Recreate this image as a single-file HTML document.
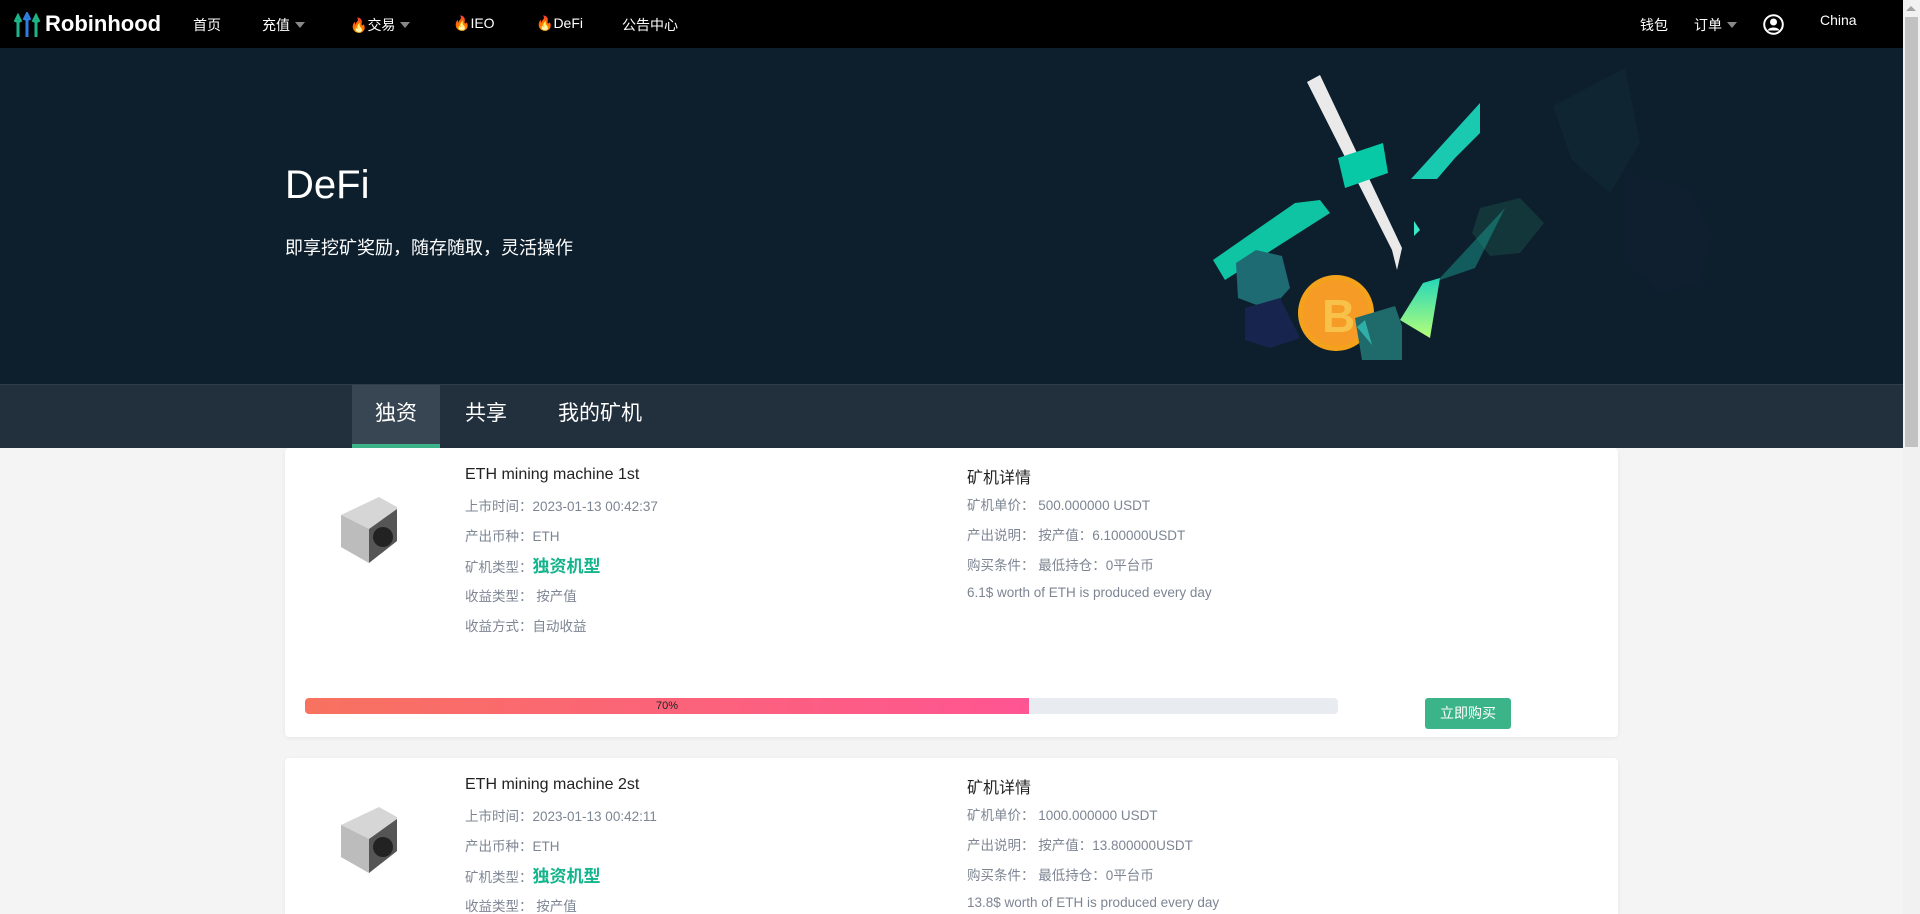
<!DOCTYPE html>
<html style="height:914px;overflow:hidden"><head><meta charset="utf-8"><style>
*{margin:0;padding:0;box-sizing:border-box}
body{width:1920px;height:914px;overflow:hidden;background:#f4f4f4;font-family:"Liberation Sans","Noto Sans CJK SC",sans-serif;position:relative}
.nav{position:absolute;left:0;top:0;width:1903px;height:48px;background:#000;color:#fff;font-size:14px}
.nav span{position:absolute;top:15px;white-space:nowrap}
.caret{display:inline-block;width:0;height:0;border-left:5px solid transparent;border-right:5px solid transparent;border-top:6px solid #888;margin-left:5px;vertical-align:2px}
.banner{position:absolute;left:0;top:48px;width:1903px;height:336px;background:#0d1f2d;overflow:hidden}
.tabs{position:absolute;left:0;top:384px;width:1903px;height:64px;background:#222f3c;border-top:1px solid #2e3d49}
.tab{position:absolute;top:0;height:63px;color:#fff;font-size:21px;line-height:58px;text-align:center}
.card{position:absolute;left:285px;width:1333px;background:#fff;border-radius:4px;box-shadow:0 1px 4px rgba(0,0,0,.06)}
.t{position:absolute;font-size:16px;color:#222;white-space:nowrap}
.r{position:absolute;font-size:13.5px;color:#7d8593;white-space:nowrap}
.g{color:#14b48c;font-size:17px;font-weight:bold}
.sb{position:absolute;left:1903px;top:0;width:17px;height:914px;background:#f1f1f1}
</style></head><body>
<div class="nav">
<svg style="position:absolute;left:14px;top:12px" width="28" height="26" viewBox="0 0 28 26"><g stroke-width="3" fill="none"><path d="M4 25V8M1 10L4 4L7 10" stroke="#1db488"/><path d="M13 25V6M10 8L13 2L16 8" stroke="#2f7de0"/><path d="M22 25V8M19 10L22 4L25 10" stroke="#1db488"/></g></svg>
<span style="left:45px;top:11px;font-size:22px;font-weight:bold">Robinhood</span>
<span style="left:193px">首页</span>
<span style="left:262px">充值<i class="caret"></i></span>
<span style="left:350px"><span style="position:static;color:#f3701c">🔥</span>交易<i class="caret"></i></span>
<span style="left:453px"><span style="position:static;color:#f3701c">🔥</span>IEO</span>
<span style="left:536px"><span style="position:static;color:#f3701c">🔥</span>DeFi</span>
<span style="left:622px">公告中心</span>
<span style="left:1640px">钱包</span>
<span style="left:1694px">订单<i class="caret"></i></span>
<svg style="position:absolute;left:1763px;top:14px" width="21" height="21" viewBox="0 0 21 21"><circle cx="10.5" cy="10.5" r="9.3" fill="none" stroke="#fff" stroke-width="2"/><circle cx="10.5" cy="8" r="3.5" fill="#fff"/><path d="M4.5 16.5C6 12.5 15 12.5 16.5 16.5Z" fill="#fff"/></svg>
<span style="left:1820px;top:12px">China</span>
</div>
<div class="banner">
<div style="position:absolute;left:285px;top:115px;color:#fff;font-size:40px">DeFi</div>
<div style="position:absolute;left:285px;top:186px;color:#fff;font-size:18px">即享挖矿奖励，随存随取，灵活操作</div>
<svg style="position:absolute;left:0;top:0" width="1903" height="336">
<polygon points="1553,58 1625,20 1640,95 1610,145 1572,112" fill="#0f2532"/>
<polygon points="1625,125 1690,140 1712,185 1700,235 1660,245 1622,210" fill="#0f1f30"/>
<polygon points="1480,160 1520,150 1544,175 1520,205 1490,208 1472,185" fill="#13363b"/>
<polygon points="1307,34 1320,27 1402,200 1397,222 1392,202" fill="#eaeaea"/>
<polygon points="1213,212 1295,155 1320,152 1330,165 1225,232" fill="#0fc4a2"/>
<polygon points="1338,110 1383,95 1388,125 1345,140" fill="#07c9a5"/>
<polygon points="1411,131 1480,55 1480,85 1455,110 1437,131" fill="#19c9b0"/>
<polygon points="1414,173 1420,182 1414,188" fill="#3ee6c8"/>
<polygon points="1400,272 1423,235 1440,230 1430,290" fill="url(#gg)"/>
<polygon points="1440,230 1505,160 1475,220 1440,232" fill="#1a9a8d" opacity=".5"/>
<defs><linearGradient id="gg" x1="0" y1="1" x2="0" y2="0"><stop offset="0" stop-color="#b6ff79"/><stop offset="1" stop-color="#25d6b9"/></linearGradient></defs>
<polygon points="1236,215 1256,202 1282,208 1290,240 1270,262 1238,250" fill="#1f6b73"/>
<polygon points="1245,260 1280,250 1300,290 1270,300 1245,292" fill="#17254e"/>
<circle cx="1336" cy="265" r="38" fill="#f4a21c"/>
<circle cx="1336" cy="265" r="33" fill="#f69b25"/>
<text x="1322" y="284" font-size="46" font-weight="bold" fill="#f8c24a" font-family="Liberation Sans">B</text>
<polygon points="1355,270 1395,258 1402,278 1402,312 1362,312" fill="#1f6a6a"/>
<polygon points="1357,279 1365,272 1372,297" fill="#3aded0" opacity=".6"/>
</svg>
</div>
<div class="tabs">
<div class="tab" style="left:352px;width:88px;background:#384552;border-bottom:4px solid #3cb48a">独资</div>
<div class="tab" style="left:451px;width:70px">共享</div>
<div class="tab" style="left:540px;width:120px">我的矿机</div>
</div>

<div class="card" style="top:448px;height:289px">
<svg style="position:absolute;left:50px;top:47px" width="80" height="72" viewBox="0 0 80 72"><polygon points="6,20 44,2 62,12 62,46 34,68 6,52" fill="#d6d6d6"/><polygon points="6,20 34,34 34,68 6,52" fill="#bcbcbc"/><polygon points="34,34 62,14 62,46 34,68" fill="#555"/><circle cx="48" cy="42" r="10" fill="#222"/></svg>
<div class="t" style="left:180px;top:18px">ETH mining machine 1st</div>
<div class="r" style="left:180px;top:47px">上市时间：2023-01-13 00:42:37</div>
<div class="r" style="left:180px;top:77px">产出币种：ETH</div>
<div class="r" style="left:180px;top:104px">矿机类型：<span class="g">独资机型</span></div>
<div class="r" style="left:180px;top:137px">收益类型： 按产值</div>
<div class="r" style="left:180px;top:167px">收益方式：自动收益</div>
<div class="t" style="left:682px;top:16px">矿机详情</div>
<div class="r" style="left:682px;top:46px">矿机单价： 500.000000 USDT</div>
<div class="r" style="left:682px;top:76px">产出说明： 按产值：6.100000USDT</div>
<div class="r" style="left:682px;top:106px">购买条件： 最低持仓：0平台币</div>
<div class="r" style="left:682px;top:137px">6.1$ worth of ETH is produced every day</div>
<div style="position:absolute;left:20px;top:250px;width:1033px;height:16px;background:#e8ebef;border-radius:4px;overflow:hidden"><div style="width:724px;height:16px;background:linear-gradient(90deg,#f8725f,#fe5593);text-align:center;font-size:11px;line-height:16px;color:#222">70%</div></div>
<div style="position:absolute;left:1140px;top:250px;width:86px;height:31px;background:#3cb48a;border-radius:3px;color:#fff;font-size:14px;text-align:center;line-height:31px">立即购买</div>
</div>

<div class="card" style="top:758px;height:156px;border-radius:4px 4px 0 0">
<svg style="position:absolute;left:50px;top:47px" width="80" height="72" viewBox="0 0 80 72"><polygon points="6,20 44,2 62,12 62,46 34,68 6,52" fill="#d6d6d6"/><polygon points="6,20 34,34 34,68 6,52" fill="#bcbcbc"/><polygon points="34,34 62,14 62,46 34,68" fill="#555"/><circle cx="48" cy="42" r="10" fill="#222"/></svg>
<div class="t" style="left:180px;top:18px">ETH mining machine 2st</div>
<div class="r" style="left:180px;top:47px">上市时间：2023-01-13 00:42:11</div>
<div class="r" style="left:180px;top:77px">产出币种：ETH</div>
<div class="r" style="left:180px;top:104px">矿机类型：<span class="g">独资机型</span></div>
<div class="r" style="left:180px;top:137px">收益类型： 按产值</div>
<div class="t" style="left:682px;top:16px">矿机详情</div>
<div class="r" style="left:682px;top:46px">矿机单价： 1000.000000 USDT</div>
<div class="r" style="left:682px;top:76px">产出说明： 按产值：13.800000USDT</div>
<div class="r" style="left:682px;top:106px">购买条件： 最低持仓：0平台币</div>
<div class="r" style="left:682px;top:137px">13.8$ worth of ETH is produced every day</div>
</div>
<div class="sb"><div style="position:absolute;left:3px;top:6px;width:0;height:0;border-left:5px solid transparent;border-right:5px solid transparent;border-bottom:5px solid #a3a3a3"></div><div style="position:absolute;left:2px;top:17px;width:13px;height:430px;background:#c1c1c1"></div></div>
</body></html>
